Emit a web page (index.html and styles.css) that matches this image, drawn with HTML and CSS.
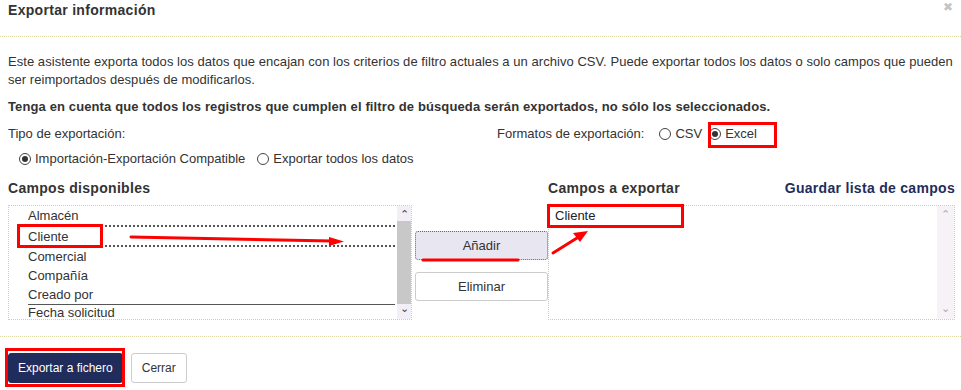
FILE: index.html
```html
<!doctype html>
<html lang="es">
<head>
  <meta charset="UTF-8">
  <title>Exportar información</title>
  <link rel="stylesheet" href="styles.css">
</head>
<body>
  <div class="dialog">
    <div class="dialog-head">
      <h1>Exportar información</h1>
      <span class="close">&#x2716;</span>
    </div>

    <div class="dialog-body">
      <p class="intro">Este asistente exporta todos los datos que encajan con los criterios de filtro actuales a un archivo CSV. Puede exportar todos los datos o solo campos que pueden ser reimportados después de modificarlos.</p>
      <p class="warn">Tenga en cuenta que todos los registros que cumplen el filtro de búsqueda serán exportados, no sólo los seleccionados.</p>

      <div class="options">
        <div class="opt-type">
          <div class="opt-label">Tipo de exportación:</div>
          <div class="radios">
            <span class="radio checked"></span><span class="radio-text">Importación-Exportación Compatible</span>
            <span class="radio"></span><span class="radio-text">Exportar todos los datos</span>
          </div>
        </div>
        <div class="opt-format">
          <span class="opt-label">Formatos de exportación:</span>
          <span class="radio"></span><span class="radio-text">CSV</span>
          <span class="radio checked"></span><span class="radio-text">Excel</span>
        </div>
      </div>

      <div class="fields">
        <h2 class="col-title">Campos disponibles</h2>
        <div></div>
        <div class="col-title right-head">
          <h2>Campos a exportar</h2>
          <a class="save-link">Guardar lista de campos</a>
        </div>

        <div class="listbox">
          <ul class="items">
            <li class="sel-top">Almacén</li>
            <li class="sel">Cliente</li>
            <li>Comercial</li>
            <li>Compañía</li>
            <li class="under">Creado por</li>
            <li class="last">Fecha solicitud</li>
          </ul>
          <div class="scroll">
            <span class="arrow">&#x2303;</span>
            <span class="thumb"></span>
            <span class="arrow down">&#x2304;</span>
          </div>
        </div>

        <div class="actions">
          <button class="btn btn-add">Añadir</button>
          <button class="btn">Eliminar</button>
        </div>

        <div class="listbox">
          <ul class="items target">
            <li>Cliente</li>
          </ul>
          <div class="scroll light">
            <span class="arrow">&#x2303;</span>
            <span class="arrow down">&#x2304;</span>
          </div>
        </div>
      </div>
    </div>

    <div class="dialog-foot">
      <button class="btn btn-primary">Exportar a fichero</button>
      <button class="btn btn-plain">Cerrar</button>
    </div>
  </div>

  <!-- red annotations drawn over the screenshot -->
  <svg class="marks" width="961" height="390" viewBox="0 0 961 390">
    <g fill="none" stroke="#f00" stroke-width="3">
      <rect x="709.5" y="123.5" width="66" height="23"/>
      <rect x="18.5" y="225.5" width="83" height="21"/>
      <rect x="548.5" y="205.5" width="134" height="21"/>
      <rect x="6.5" y="349.5" width="117" height="36"/>
    </g>
    <g stroke="#f00" stroke-linecap="round">
      <line x1="131" y1="237" x2="332" y2="241" stroke-width="3"/>
      <line x1="423" y1="260" x2="518" y2="260" stroke-width="3"/>
      <line x1="553" y1="253" x2="577" y2="238" stroke-width="3"/>
    </g>
    <g fill="#f00">
      <polygon points="344,241.5 329,237 329,246"/>
      <polygon points="588,231 573,233 580,242"/>
    </g>
  </svg>
</body>
</html>
```

FILE: styles.css
```css
html, body {
  margin: 0;
  padding: 0;
  background: #fff;
}
body {
  position: relative;
  width: 961px;
  height: 390px;
  overflow: hidden;
  font-family: "Liberation Sans", Arial, sans-serif;
  font-size: 13px;
  color: #333;
}
.dialog-head {
  position: relative;
  height: 35px;
  padding: 1px 8px 0;
  border-bottom: 1px dotted #dcd7a2;
}
.dialog-head h1 {
  margin: 0;
  font-size: 14px;
  line-height: 18px;
  font-weight: bold;
  letter-spacing: 0.3px;
  color: #333;
}
.close {
  position: absolute;
  top: 0;
  right: 8px;
  font-size: 12px;
  line-height: 14px;
  color: #c4c4c4;
}

.dialog-body {
  padding: 0 6px 0 8px;
}
.intro {
  margin: 16px 0 0;
  line-height: 18px;
  letter-spacing: 0.05px;
}
.warn {
  margin: 9px 0 0;
  line-height: 18px;
  font-weight: bold;
  letter-spacing: 0.12px;
}

.options {
  display: flex;
  margin-top: 9px;
}
.opt-type {
  width: 489px;
}
.opt-label {
  line-height: 18px;
}
.radios {
  display: flex;
  align-items: center;
  margin-top: 7px;
  padding-left: 11px;
  line-height: 18px;
}
.opt-format {
  display: flex;
  align-items: flex-start;
  line-height: 18px;
}
.opt-format .opt-label {
  margin-right: 15px;
}
.radio {
  display: inline-block;
  box-sizing: border-box;
  width: 12px;
  height: 12px;
  margin-top: 3px;
  margin-right: 4px;
  border: 1px solid #444;
  border-radius: 50%;
  position: relative;
  flex: none;
}
.radios .radio {
  margin-top: 0;
}
.radio.checked:after {
  content: '';
  position: absolute;
  top: 2px;
  left: 2px;
  width: 6px;
  height: 6px;
  border-radius: 50%;
  background: #333;
}
.radio-text {
  margin-right: 12px;
}
.opt-format .radio-text {
  margin-right: 7px;
}

.fields {
  display: grid;
  grid-template-columns: 404px 136px 1fr;
  margin-top: 11px;
}
.col-title {
  margin: 0 0 8px;
  font-size: 14px;
  line-height: 18px;
  font-weight: bold;
  letter-spacing: 0.3px;
  color: #333;
}
.right-head {
  display: flex;
  justify-content: space-between;
}
.right-head h2 {
  margin: 0;
  font-size: 14px;
}
.save-link {
  color: #1f2d5c;
}

.listbox {
  display: flex;
  height: 113px;
  border: 1px dotted #c9c9d8;
  background: #fff;
}
.items {
  flex: 1;
  margin: 0;
  padding: 0;
  list-style: none;
  overflow: hidden;
}
.items li {
  box-sizing: border-box;
  height: 19px;
  line-height: 19px;
  padding-left: 19px;
  margin-right: 2px;
}
.items li.sel-top,
.items li.sel,
.items li.under {
  margin-left: 19px;
  padding-left: 0;
}
.items li.sel-top {
  height: 21px;
  border-bottom: 2px dotted #555;
}
.items li.sel {
  height: 20px;
  border-bottom: 2px dotted #555;
}
.items li.under {
  height: 20px;
  border-bottom: 1px solid #555;
}
.items li.last {
  height: 16px;
  line-height: 16px;
}
.items.target li {
  padding-left: 6px;
  color: #222;
}

.scroll {
  display: flex;
  flex-direction: column;
  align-items: center;
  width: 14px;
  background: #f2f0f6;
}
.scroll.light {
  width: 17px;
  justify-content: space-between;
  background: #f6f2f6;
}
.arrow {
  height: 15px;
  font-size: 11px;
  line-height: 17px;
  color: #444;
}
.arrow.down {
  line-height: 8px;
}
.scroll.light .arrow {
  color: #aaa;
}
.thumb {
  flex: 1;
  width: 14px;
  background: #c8c8c8;
}

.actions {
  display: flex;
  flex-direction: column;
  gap: 12px;
  padding: 26px 0 0 3px;
}
.btn {
  box-sizing: border-box;
  font-family: "Liberation Sans", Arial, sans-serif;
  font-size: 13px;
  color: #333;
  background: #fff;
  border: 1px solid #ccc;
  border-radius: 3px;
  cursor: pointer;
}
.actions .btn {
  height: 29px;
}
.btn-add {
  background: #e8e6f0;
  border: 1px dotted #666;
}

.dialog-foot {
  display: flex;
  gap: 8px;
  margin-top: 16px;
  padding: 16px 8px 0;
  border-top: 1px dotted #dcd7a2;
}
.btn-primary {
  height: 30px;
  padding: 0 9px;
  font-size: 12px;
  background: #1f2c5c;
  border-color: #1f2c5c;
  color: #fff;
}
.btn-plain {
  height: 30px;
  padding: 0 10px;
  font-size: 12px;
}

.marks {
  position: absolute;
  top: 0;
  left: 0;
  pointer-events: none;
}
```
